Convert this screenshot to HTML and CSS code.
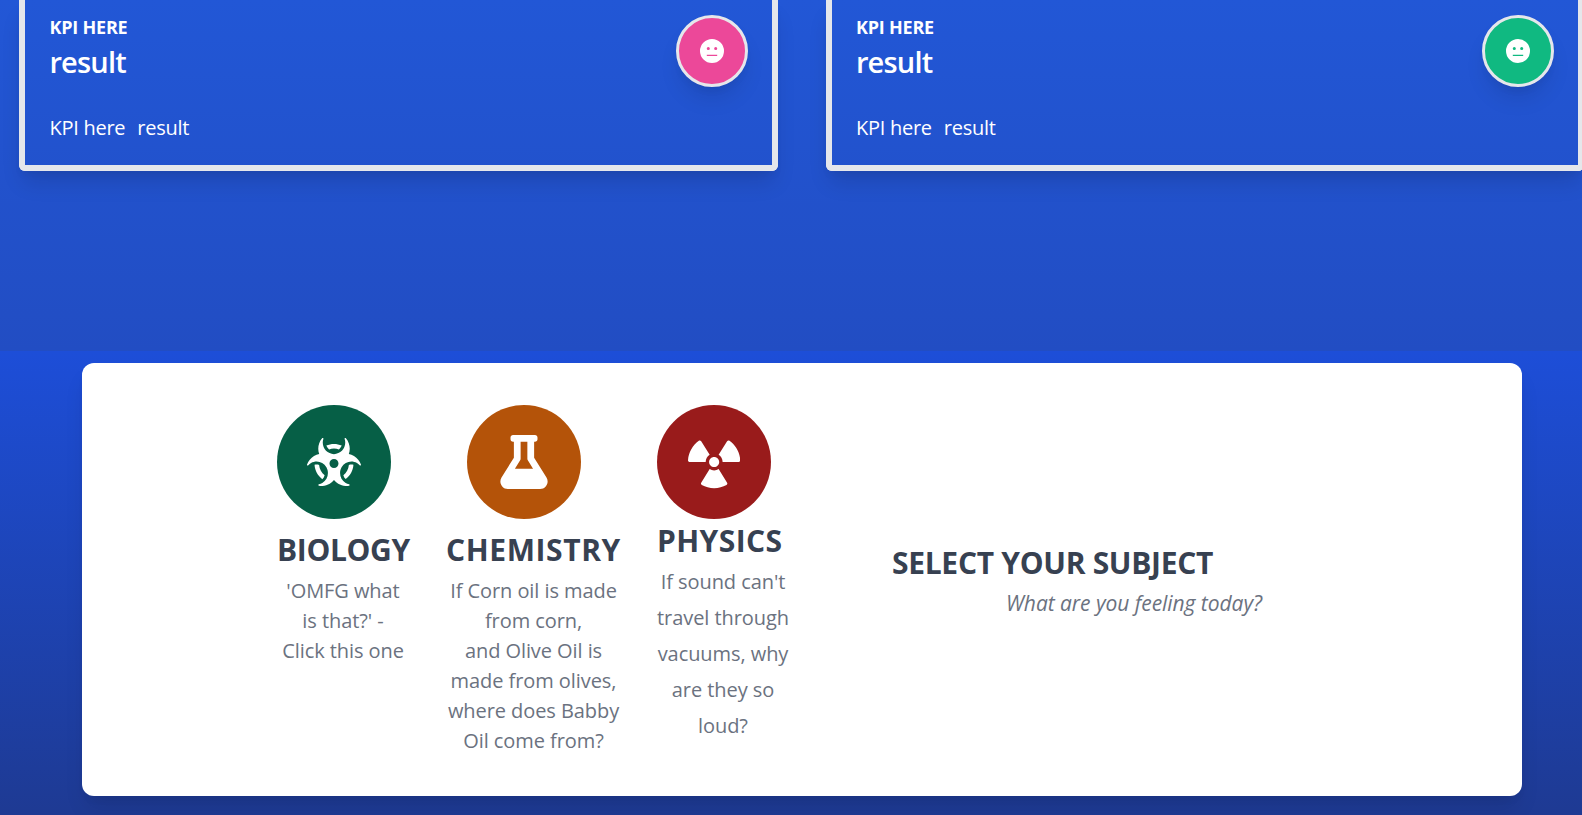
FILE: index.html
```html
<!DOCTYPE html>
<html lang="en">
<head>
<meta charset="utf-8">
<title>Select your subject</title>
<link rel="stylesheet" href="styles.css">
</head>
<body>
<section class="stats">
  <article class="kpi">
    <div class="kpi-top">
      <div>
        <h5 class="kpi-label"><span>KPI HERE</span></h5>
        <div class="kpi-value"><span>result</span></div>
      </div>
      <div class="face pink"><svg viewBox="0 0 24 24"><path fill-rule="evenodd" d="M12 0a12 12 0 1 0 0 24 12 12 0 0 0 0-24zM8.3 7.9a1.55 1.55 0 1 1 0 3.1 1.55 1.55 0 0 1 0-3.1zm7.4 0a1.55 1.55 0 1 1 0 3.1 1.55 1.55 0 0 1 0-3.1zM6.8 15.7h10.4v1.4H6.8z"/></svg></div>
    </div>
    <p class="kpi-foot"><span>KPI here</span><span>result</span></p>
  </article>
  <article class="kpi">
    <div class="kpi-top">
      <div>
        <h5 class="kpi-label"><span>KPI HERE</span></h5>
        <div class="kpi-value"><span>result</span></div>
      </div>
      <div class="face green"><svg viewBox="0 0 24 24"><path fill-rule="evenodd" d="M12 0a12 12 0 1 0 0 24 12 12 0 0 0 0-24zM8.3 7.9a1.55 1.55 0 1 1 0 3.1 1.55 1.55 0 0 1 0-3.1zm7.4 0a1.55 1.55 0 1 1 0 3.1 1.55 1.55 0 0 1 0-3.1zM6.8 15.7h10.4v1.4H6.8z"/></svg></div>
    </div>
    <p class="kpi-foot"><span>KPI here</span><span>result</span></p>
  </article>
</section>
<section class="subjects">
  <div class="panel">
    <div class="subject biology">
      <div class="disc"><svg width="54" height="48" viewBox="0 0 576 512"><path d="M287.9 112c18.6 0 36.2 3.8 52.8 9.6 13.3-10.3 23.6-24.3 29.5-40.7-25.2-10.9-53-16.9-82.2-16.9-29.1 0-56.9 6-82.1 16.9 5.9 16.4 16.2 30.4 29.5 40.7 16.5-5.7 34-9.6 52.5-9.6zM163.6 438.7c12-11.8 20.4-26.4 24.5-42.4-32.9-26.4-54.8-65.3-58.9-109.6-8.5-2.8-17.2-4.6-26.4-4.6-7.6 0-15.2 1-22.5 3.1 4.1 62.8 35.8 118 83.3 153.5zm224.2-42.6c4.1 16 12.5 30.7 24.5 42.5 47.4-35.5 79.1-90.7 83-153.5-7.2-2-14.7-3-22.2-3-9.2 0-18 1.9-26.6 4.7-4.1 44.2-26 82.9-58.7 109.3zm113.5-205c-17.6-10.4-36.3-16.6-55.3-19.9 6-17.7 10-36.4 10-56.2 0-41-14.5-80.8-41-112.2-2.5-3-6.6-3.7-10-1.8-3.3 1.9-4.8 6-3.6 9.7 4.5 13.8 6.6 26.3 6.6 38.5 0 67.8-53.8 122.9-120 122.9S168 117 168 49.2c0-12.1 2.2-24.7 6.6-38.5 1.2-3.7-.3-7.8-3.6-9.7-3.4-1.9-7.5-1.2-10 1.8C134.6 34.2 120 74 120 115c0 19.8 3.9 38.5 10 56.2-18.9 3.3-37.7 9.5-55.3 19.9-34.6 20.5-61 53.3-74.3 92.4-1.3 3.7.2 7.7 3.5 9.8 3.3 2 7.5 1.3 10-1.6 9.4-10.8 19-19.1 29.2-25.1 57.3-33.9 130.8-13.7 163.9 45 33.1 58.7 13.4 134-43.9 167.9-10.2 6.1-22 10.4-35.8 13.4-3.7.8-6.4 4.2-6.4 8.1.1 4 2.7 7.3 6.5 8 39.7 7.8 80.6.8 115.2-19.7 18-10.6 32.9-24.5 45.3-40.1 12.4 15.6 27.3 29.5 45.3 40.1 34.6 20.5 75.5 27.5 115.2 19.7 3.8-.7 6.4-4 6.5-8 0-3.9-2.6-7.3-6.4-8.1-13.9-2.9-25.6-7.3-35.8-13.4-57.3-33.9-77-109.2-43.9-167.9s106.6-78.9 163.9-45c10.2 6.1 19.8 14.3 29.2 25.1 2.5 2.9 6.7 3.6 10 1.6s4.8-6.1 3.5-9.8c-13.1-39.1-39.5-72-74.1-92.4zm-213.4 129c-26.5 0-48-21.5-48-48s21.5-48 48-48 48 21.5 48 48-21.5 48-48 48z"/></svg></div>
      <h2><span>BIOLOGY</span></h2>
      <p>'OMFG what<br>is that?' -<br>Click this one</p>
    </div>
    <div class="subject chemistry">
      <div class="disc"><svg width="48" height="54" viewBox="0 0 448 512"><path d="M437.2 403.5L320 215V64h8c13.3 0 24-10.7 24-24V24c0-13.3-10.7-24-24-24H120c-13.3 0-24 10.7-24 24v16c0 13.3 10.7 24 24 24h8v151L10.8 403.5C-18.5 450.6 15.3 512 70.9 512h306.2c55.7 0 89.4-61.5 60.1-108.5zM137.9 320l48.2-77.6c3.7-5.2 5.8-11.6 5.8-18.4V64h64v160c0 6.9 2.2 13.2 5.8 18.4l48.2 77.6h-172z"/></svg></div>
      <h2><span>CHEMISTRY</span></h2>
      <p>If Corn oil is made<br>from corn,<br>and Olive Oil is<br>made from olives,<br>where does Babby<br>Oil come from?</p>
    </div>
    <div class="subject physics">
      <div class="disc"><svg width="52.3" height="54" viewBox="0 0 496 512"><path d="M328.2 255.8h151.6c9.1 0 16.8-7.7 16.2-16.8-5.1-75.8-44.4-142.2-102.5-184.2-7.4-5.3-17.9-2.9-22.7 4.8L290.4 188c22.6 14.3 37.8 39.2 37.8 67.8zm-37.8 67.7c-12.3 7.7-26.8 12.4-42.4 12.4-15.6 0-30-4.7-42.4-12.4L125.2 452c-4.8 7.7-2.4 18.1 5.6 22.4C165.7 493.2 205.6 504 248 504s82.3-10.8 117.2-29.6c8-4.3 10.4-14.8 5.6-22.4l-80.4-128.5zM248 303.8c26.5 0 48-21.5 48-48s-21.5-48-48-48-48 21.5-48 48 21.5 48 48 48zm-231.8-48h151.6c0-28.6 15.2-53.5 37.8-67.7L125.2 59.7c-4.8-7.7-15.3-10.2-22.7-4.8C44.4 96.9 5.1 163.3 0 239.1c-.6 9 7.1 16.7 16.2 16.7z"/></svg></div>
      <h2><span>PHYSICS</span></h2>
      <p>If sound can't<br>travel through<br>vacuums, why<br>are they so<br>loud?</p>
    </div>
    <div class="prompt">
      <h2><span>SELECT YOUR SUBJECT</span></h2>
      <p><em>What are you feeling today?</em></p>
    </div>
  </div>
</section>
</body>
</html>
```
FILE: styles.css
```css
* { box-sizing: border-box; }
html, body { height: 100%; }
body {
  margin: 0;
  overflow: hidden;
  background: #1d4ed8;
  font-family: "Open Sans", "Noto Sans", sans-serif;
}
h2, h5, p { margin: 0; }
svg { display: block; fill: #fff; }

.stats {
  display: flex;
  gap: 48px;
  align-items: flex-start;
  height: 351px;
  padding-left: 19.4px;
  background: linear-gradient(#2257d6, #224dc3);
}
.kpi {
  flex: 0 0 758.5px;
  height: 171px;
  padding: 15px 24px 0;
  border: 6px solid #e5e7eb;
  border-top: 0;
  border-radius: 0 0 6px 6px;
  color: #fff;
  box-shadow: 0 15px 22px -4px rgba(0, 0, 0, .12), 0 6px 9px -3px rgba(0, 0, 0, .06);
}
.kpi-top { display: flex; justify-content: space-between; height: 98px; }
.kpi-label { font-size: 18px; line-height: 24px; font-weight: 700; letter-spacing: -.2px; }
.kpi-value { font-size: 29px; line-height: 46px; font-weight: 600; letter-spacing: -.8px; }
.kpi-foot { display: flex; gap: 12px; font-size: 20px; line-height: 30px; letter-spacing: -.25px; }
.face {
  display: flex;
  align-items: center;
  justify-content: center;
  width: 72px;
  height: 72px;
  border: 3px solid #e5e7eb;
  border-radius: 50%;
  box-shadow: 0 15px 22px -4px rgba(0, 0, 0, .1), 0 6px 9px -3px rgba(0, 0, 0, .05);
}
.face svg { width: 24px; height: 24px; }
.pink { background: #ec4899; }
.green { background: #10b981; }

.subjects {
  height: 464px;
  padding: 12px 60px 0 82px;
  background: linear-gradient(#1d4ed8, #1e3a93);
}
.panel {
  display: flex;
  align-items: flex-start;
  height: 433px;
  padding: 42px 0 0 195px;
  border-radius: 12px;
  background: #fff;
  box-shadow: 0 15px 22px -4px rgba(0, 0, 0, .1), 0 6px 9px -3px rgba(0, 0, 0, .05);
}
.disc {
  display: flex;
  align-items: center;
  justify-content: center;
  width: 114px;
  height: 114px;
  border-radius: 50%;
}
.subject h2, .prompt h2 {
  color: #374151;
  font-size: 30px;
  line-height: 36px;
  font-weight: 700;
  white-space: nowrap;
}
.subject p, .prompt p {
  color: #6b7280;
  font-size: 20px;
  line-height: 30px;
  white-space: nowrap;
}
.subject p { text-align: center; letter-spacing: -.07px; }
.biology { width: 132px; }
.chemistry { width: 175px; margin-left: 37px; }
.physics { width: 132px; margin-left: 36px; }
.biology .disc { background: #065f46; }
.chemistry .disc { margin-left: 21px; background: #b45309; }
.physics .disc { background: #991b1b; }
.biology h2, .chemistry h2 { margin: 13px 0 8px; }
.biology h2 { letter-spacing: -.35px; }
.chemistry h2 { letter-spacing: .6px; }
.physics h2 { margin: 4px 0 5px; letter-spacing: .4px; }
.physics p { line-height: 36px; }
.prompt { padding: 140px 0 0 103px; }
.prompt h2 { letter-spacing: -.3px; }
.prompt p { margin-top: 7px; padding-left: 114px; font-size: 21px; letter-spacing: -.05px; }
```
